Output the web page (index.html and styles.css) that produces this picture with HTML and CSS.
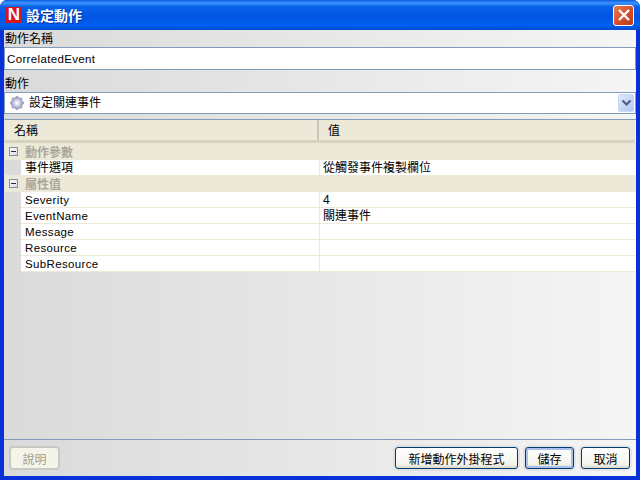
FILE: index.html
```html
<!DOCTYPE html>
<html lang="zh-Hant">
<head>
<meta charset="utf-8">
<title>設定動作</title>
<link rel="stylesheet" href="styles.css">
</head>
<body>
<div class="window">
  <header class="titlebar">
    <span class="logo">N</span>
    <span class="title">設定動作</span>
    <span class="close">
      <svg width="14" height="14" viewBox="0 0 14 14"><path d="M2 2 L12 12 M12 2 L2 12" stroke="#fff" stroke-width="2.4" fill="none"/></svg>
    </span>
  </header>
  <main class="content">
    <div class="label">動作名稱</div>
    <div class="field">CorrelatedEvent</div>
    <div class="label label-second">動作</div>
    <div class="field select">
      <svg class="gear" width="16" height="16" viewBox="0 0 16 16">
        <circle cx="8" cy="8" r="5.6" fill="#b3b3d6" stroke="#8d8daf" stroke-width="1"/>
        <path d="M8 1v14M1 8h14M3 3l10 10M13 3L3 13" stroke="#a5a5c8" stroke-width="2.2"/>
        <circle cx="8" cy="8" r="4.6" fill="#c4c4e0"/>
        <circle cx="8" cy="8" r="2.4" fill="#f0f0f8"/>
      </svg>
      <span class="select-text">設定關連事件</span>
      <span class="arrow">
        <svg width="11" height="9" viewBox="0 0 11 9"><path d="M1.5 1.5 L5.5 5.5 L9.5 1.5" stroke="#4d6185" stroke-width="2.2" fill="none"/></svg>
      </span>
    </div>
    <section class="table">
      <div class="thead">
        <div class="th th-name">名稱</div>
        <div class="th th-value">值</div>
      </div>
      <div class="group"><span class="tree-box"></span><span class="group-name">動作參數</span></div>
      <div class="row row-first"><div class="cell-name cell-cjk">事件選項</div><div class="cell-value">從觸發事件複製欄位</div></div>
      <div class="group"><span class="tree-box"></span><span class="group-name">屬性值</span></div>
      <div class="row"><div class="cell-name">Severity</div><div class="cell-value">4</div></div>
      <div class="row"><div class="cell-name">EventName</div><div class="cell-value">關連事件</div></div>
      <div class="row"><div class="cell-name">Message</div><div class="cell-value"></div></div>
      <div class="row"><div class="cell-name">Resource</div><div class="cell-value"></div></div>
      <div class="row"><div class="cell-name">SubResource</div><div class="cell-value"></div></div>
    </section>
    <footer class="footer">
      <button class="btn btn-help" disabled>說明</button>
      <span class="spacer"></span>
      <button class="btn btn-add">新增動作外掛程式</button>
      <button class="btn btn-save">儲存</button>
      <button class="btn btn-cancel">取消</button>
    </footer>
  </main>
</div>
</body>
</html>
```
FILE: styles.css
```css
* { box-sizing: border-box; }
html, body { margin: 0; padding: 0; width: 640px; height: 480px; overflow: hidden; background: #fff; }
body { font-family: "Liberation Sans", "Noto Sans CJK TC", sans-serif; font-size: 12px; color: #000; }
.window {
  width: 640px; height: 480px; display: flex; flex-direction: column;
  background: #0831d9; border-radius: 7px 7px 0 0; overflow: hidden;
}
.titlebar {
  height: 30px; flex: none; display: flex; align-items: center; padding: 0 6px 0 6px;
  background: linear-gradient(180deg, #0a5de0 0%, #3d95ff 10%, #0a62ea 22%, #0055e3 55%, #0060f0 85%, #0048cc 100%);
}
.logo {
  width: 16px; height: 16px; background: #d8141c; color: #fff; font-weight: bold; font-size: 17px;
  line-height: 16px; text-align: center; margin-right: 4px;
}
.title { color: #fff; font-size: 14px; font-weight: bold; text-shadow: 1px 1px 0 #0a2f90; flex: 1; }
.close {
  width: 21px; height: 21px; border: 1px solid #fff; border-radius: 3px; display: flex; align-items: center; justify-content: center;
  background: linear-gradient(135deg, #e8805c, #d8502c 50%, #b93a14);
}
.content {
  flex: 1; margin: 0 4px 4px; background: linear-gradient(90deg, #dadada, #f5f5f5);
  display: flex; flex-direction: column; min-height: 0;
}
.label { height: 17px; line-height: 18px; padding-left: 1px; font-size: 12px; }
.label-second { margin-top: 6px; height: 16px; line-height: 16px; }
.field {
  height: 23px; background: #fff; border: 1px solid #7f9db9; padding-left: 2px; line-height: 22px; font-size: 11.5px; letter-spacing: .35px;
}
.select { display: flex; align-items: center; height: 22px; padding-left: 4px; letter-spacing: 0; }
.gear { flex: none; }
.select-text { flex: 1; margin-left: 4px; font-size: 12px; }
.arrow {
  width: 16px; height: 18px; margin-right: 1px; background: linear-gradient(135deg, #dfe8fb, #b4c6f2); border-radius: 2px;
  display: flex; align-items: center; justify-content: center; border: 1px solid #c9d6f5;
}
.table { margin-top: 5px; border-top: 1px solid #7f9db9; border-left: 1px solid #e0e0e0; }
.thead { height: 23px; display: flex; background: #ece9d8; border-bottom: 3px solid #d5d2c0; margin-right: 1px; }
.th { line-height: 22px; font-size: 12px; }
.th-name { width: 314px; padding-left: 9px; border-right: 2px solid #cbc7b8; }
.th-value { padding-left: 9px; }
.group { height: 17px; display: flex; align-items: center; background: #ece9d8; }
.tree-box {
  width: 9px; height: 9px; margin: 0 0 0 4px; border: 1px solid #7f8fa8; background: linear-gradient(135deg, #fff, #d8d8e0); position: relative;
}
.tree-box::after { content: ""; position: absolute; left: 1px; top: 3px; width: 5px; height: 1px; background: #20303f; }
.group-name { margin-left: 7px; color: #a9a79b; font-weight: bold; font-size: 12px; }
.row { height: 16px; display: flex; margin-left: 16px; background: #fff; border-bottom: 1px solid #ece9d8; line-height: 17px; }
.row-first { height: 15px; border-bottom: 0; }
.cell-name { width: 299px; padding-left: 4px; border-right: 1px solid #ece9d8; font-size: 11.5px; letter-spacing: .35px; }
.cell-cjk { font-size: 12px; letter-spacing: 0; }
.cell-value { flex: 1; padding-left: 3px; font-size: 12px; }
.footer {
  margin-top: auto; height: 37px; flex: none; border-top: 1px solid #7f9db9; display: flex; align-items: center; gap: 7px; padding: 0 6px;
}
.spacer { flex: 1; }
.btn {
  height: 22px; font-family: inherit; font-size: 12px; padding: 0; color: #000; border: 1px solid #003c74; border-radius: 3px;
  background: linear-gradient(180deg, #fff, #f4f4ee 80%, #dcd8c8); box-shadow: 0 0 0 2px rgba(0,0,0,.05);
}
.btn-help { width: 49px; color: #a1a192; border-color: #c9c7ba; background: #f5f4ea; box-shadow: 0 0 0 1px rgba(0,0,0,.08); }
.btn-add { width: 123px; }
.btn-save { width: 49px; box-shadow: inset 0 0 0 2px #a9c0ec, 0 0 0 2px rgba(0,0,0,.05); }
.btn-cancel { width: 49px; }
```
